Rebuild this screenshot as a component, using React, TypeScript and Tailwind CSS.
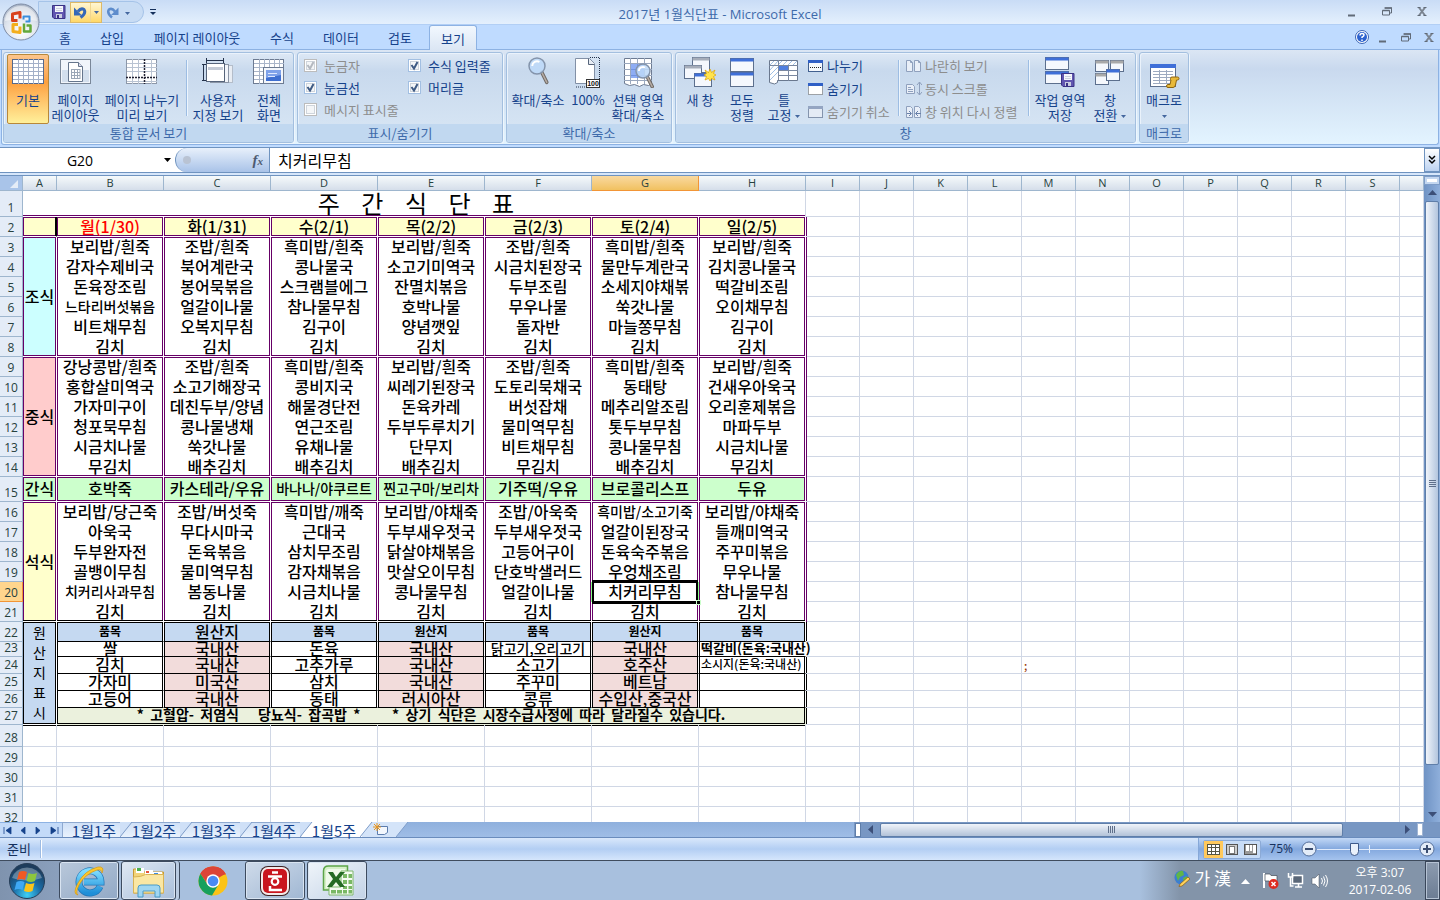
import React from 'react';
import clsx from 'clsx';

/* ---------- Data ---------- */

const COLUMNS = 'ABCDEFGHIJKLMNOPQRS'.split('');
const SPARE = 'IJKLMNOPQRST'.split('');

const DAYS = ['월(1/30)', '화(1/31)', '수(2/1)', '목(2/2)', '금(2/3)', '토(2/4)', '일(2/5)'];

const BREAKFAST = [
  ['보리밥/흰죽', '조밥/흰죽', '흑미밥/흰죽', '보리밥/흰죽', '조밥/흰죽', '흑미밥/흰죽', '보리밥/흰죽'],
  ['감자수제비국', '북어계란국', '콩나물국', '소고기미역국', '시금치된장국', '물만두계란국', '김치콩나물국'],
  ['돈육장조림', '봉어묵볶음', '스크램블에그', '잔멸치볶음', '두부조림', '소세지야채볶', '떡갈비조림'],
  ['느타리버섯볶음', '얼갈이나물', '참나물무침', '호박나물', '무우나물', '쑥갓나물', '오이채무침'],
  ['비트채무침', '오복지무침', '김구이', '양념깻잎', '돌자반', '마늘쫑무침', '김구이'],
  ['김치', '김치', '김치', '김치', '김치', '김치', '김치'],
];

const LUNCH = [
  ['강낭콩밥/흰죽', '조밥/흰죽', '흑미밥/흰죽', '보리밥/흰죽', '조밥/흰죽', '흑미밥/흰죽', '보리밥/흰죽'],
  ['홍합살미역국', '소고기해장국', '콩비지국', '씨레기된장국', '도토리묵채국', '동태탕', '건새우아욱국'],
  ['가자미구이', '데친두부/양념', '해물경단전', '돈육카레', '버섯잡채', '메추리알조림', '오리훈제볶음'],
  ['청포묵무침', '콩나물냉채', '연근조림', '두부두루치기', '물미역무침', '톳두부무침', '마파두부'],
  ['시금치나물', '쑥갓나물', '유채나물', '단무지', '비트채무침', '콩나물무침', '시금치나물'],
  ['무김치', '배추김치', '배추김치', '배추김치', '무김치', '배추김치', '무김치'],
];

const SNACK = ['호박죽', '카스테라/우유', '바나나/야쿠르트', '찐고구마/보리차', '기주떡/우유', '브로콜리스프', '두유'];

const DINNER = [
  ['보리밥/당근죽', '조밥/버섯죽', '흑미밥/깨죽', '보리밥/야채죽', '조밥/아욱죽', '흑미밥/소고기죽', '보리밥/야채죽'],
  ['아욱국', '무다시마국', '근대국', '두부새우젓국', '두부새우젓국', '얼갈이된장국', '들깨미역국'],
  ['두부완자전', '돈육볶음', '삼치무조림', '닭살야채볶음', '고등어구이', '돈육숙주볶음', '주꾸미볶음'],
  ['골뱅이무침', '물미역무침', '감자채볶음', '맛살오이무침', '단호박샐러드', '우엉채조림', '무우나물'],
  ['치커리사과무침', '봄동나물', '시금치나물', '콩나물무침', '얼갈이나물', '치커리무침', '참나물무침'],
  ['김치', '김치', '김치', '김치', '김치', '김치', '김치'],
];

const SMALL = new Set(['느타리버섯볶음', '치커리사과무침', '바나나/야쿠르트', '찐고구마/보리차', '흑미밥/소고기죽']);

const ORIGIN_HEAD = ['품목', '원산지', '품목', '원산지', '품목', '원산지', '품목'];
const ORIGIN = [
  ['쌀', '국내산', '돈육', '국내산', '닭고기,오리고기', '국내산', '떡갈비(돈육:국내산)'],
  ['김치', '국내산', '고추가루', '국내산', '소고기', '호주산', '소시지(돈육:국내산)'],
  ['가자미', '미국산', '삼치', '국내산', '주꾸미', '베트남', ''],
  ['고등어', '국내산', '동태', '러시아산', '콩류', '수입산,중국산', ''],
];

/* ---------- Sheet cells ---------- */

const SHADOW = {
  box: 'shadow-[inset_0_0_0_1px_#660066]',
  top: 'shadow-[inset_1px_0_#660066,inset_-1px_0_#660066,inset_0_1px_#660066]',
  mid: 'shadow-[inset_1px_0_#660066,inset_-1px_0_#660066]',
  bottom: 'shadow-[inset_1px_0_#660066,inset_-1px_0_#660066,inset_0_-1px_#660066]',
  dinnerEnd: 'shadow-[inset_0_-1px_#000,inset_1px_0_#660066,inset_-1px_0_#660066]',
  dinnerTitle: 'shadow-[inset_0_-1px_#000,inset_0_0_0_1px_#660066]',
  black: 'shadow-[inset_0_0_0_1px_#000]',
  blackSides: 'shadow-[inset_1px_0_#000,inset_-1px_0_#000]',
};

const cellBase = 'p-0 text-center whitespace-nowrap bg-clip-padding';

function RowHead({ n, active }: { n: number; active?: boolean }) {
  return (
    <th
      scope="row"
      className={clsx(
        'p-0 pb-[2px] align-bottom border-r border-b font-["Open_Sans","Noto_Sans",sans-serif] text-[12px] leading-[12px] font-normal text-[#27413e] overflow-hidden',
        active ? 'bg-[#ffd58d] border-[#f29536]' : 'bg-[#e4ecf7] border-[#9eb6ce]',
      )}
    >
      {n}
    </th>
  );
}

function Spare({ row, edge, joined }: { row: number; edge?: 'purple' | 'black'; joined?: boolean }) {
  return (
    <>
      {SPARE.map((c) => (
        <td
          key={c}
          className={clsx(
            'p-0 text-[11px] leading-[12px] text-left text-[#993300]',
            c === 'I' && joined
              ? 'border-r border-r-[#d0d7e5] shadow-[inset_1px_0_#660066,inset_0_-1px_#d0d7e5]'
              : 'border-r border-b border-[#d0d7e5]',
            c === 'I' && !joined && edge === 'purple' && 'shadow-[inset_1px_0_#660066]',
            c === 'I' && edge === 'black' && 'shadow-[inset_1px_0_#000]',
            c === 'M' && 'pl-[2px]',
          )}
        >
          {row === 24 && c === 'M' ? ';' : null}
        </td>
      ))}
    </>
  );
}

function Selection() {
  return (
    <span aria-hidden="true">
      <span className="absolute -top-[2px] -bottom-[2px] left-0 right-0 border-x-2 border-y-[3px] border-black" />
      <span className="absolute top-0 bottom-0 -left-[1px] w-[1px] bg-[#8f8]" />
      <span className="absolute top-0 bottom-0 -right-[1px] w-[1px] bg-[#8f8]" />
      <span className="absolute -bottom-[3px] -right-[3px] w-[5px] h-[5px] bg-black border border-[#cfc]" />
    </span>
  );
}

function MealBlock({ title, rows, start, fill, last }: { title: string; rows: string[][]; start: number; fill: string; last?: boolean }) {
  return (
    <>
      {rows.map((r, i) => {
        const n = start + i;
        const end = i === rows.length - 1;
        const shadow = i === 0 ? SHADOW.top : end ? (last ? SHADOW.dinnerEnd : SHADOW.bottom) : SHADOW.mid;
        return (
          <tr key={n} className="h-[20px]">
            <RowHead n={n} active={n === 20} />
            {i === 0 && (
              <td rowSpan={6} className={clsx(cellBase, 'align-middle border-r border-b border-white leading-[19px]', fill, last ? SHADOW.dinnerTitle : SHADOW.box)}>
                {title}
              </td>
            )}
            {r.map((t, c) => {
              const sel = n === 20 && c === 5;
              return (
                <td
                  key={c}
                  className={clsx(
                    cellBase,
                    'align-top border-r border-white leading-[18px]',
                    end && 'border-b',
                    shadow,
                    SMALL.has(t) && 'text-[14px]',
                    sel && 'relative',
                  )}
                >
                  {t}
                  {sel && <Selection />}
                </td>
              );
            })}
            <Spare row={n} edge="purple" joined />
          </tr>
        );
      })}
    </>
  );
}

const ORIGIN_H = ['h-[15px]', 'h-[17px]', 'h-[17px]', 'h-[17px]'];

function Sheet() {
  return (
    <table className='table-fixed w-full border-separate border-spacing-0 font-["Noto_Sans_CJK_KR",sans-serif] text-[16px] font-medium text-black'>
      <colgroup>
        <col className="w-[23px]" />
        <col className="w-[34px]" />
        {DAYS.map((d) => (
          <col key={d} className="w-[107px]" />
        ))}
        {SPARE.slice(0, 11).map((c) => (
          <col key={c} className="w-[54px]" />
        ))}
        <col />
      </colgroup>
      <thead>
        <tr className="h-[15px]">
          <th aria-label="모두 선택" className="p-0 border-r border-b border-[#9eb6ce] bg-[#a9c4e9]">
            <svg width="22" height="14" viewBox="0 0 22 14" className="block">
              <path d="M18 4v8h-8z" fill="#e4ecf7" />
            </svg>
          </th>
          {[...COLUMNS, ''].map((c) => (
            <th
              key={c}
              scope="col"
              className={clsx(
                'p-0 border-r border-b font-["Open_Sans","Noto_Sans",sans-serif] text-[11px] leading-[14px] font-normal text-[#27413e]',
                c === 'G' ? 'bg-linear-to-b from-[#f9d99f] to-[#f1c15f] border-[#f29536]' : 'bg-linear-to-b from-[#f6fafb] to-[#d5deea] border-[#9eb6ce]',
              )}
            >
              {c}
            </th>
          ))}
        </tr>
      </thead>
      <tbody>
        <tr className="h-[26px]">
          <RowHead n={1} />
          <td colSpan={8} className="p-0 pl-[4px] text-center align-top border-r border-b border-r-[#d0d7e5] border-b-white text-[24px] leading-[24px] font-normal whitespace-pre shadow-[inset_0_-1px_#660066]">
            {'주    간    식    단    표'}
          </td>
          <Spare row={1} />
        </tr>
        <tr className="h-[20px]">
          <RowHead n={2} />
          <td className={clsx(cellBase, 'bg-[#ffffcc] border-r border-b border-r-black border-b-white shadow-[inset_-1px_0_#000,inset_0_0_0_1px_#660066]')} />
          {DAYS.map((d, i) => (
            <td key={d} className={clsx(cellBase, 'align-top bg-[#ffffcc] border-r border-b border-white leading-[18px]', SHADOW.box, i === 0 && 'text-[#ff0000]')}>
              {d}
            </td>
          ))}
          <Spare row={2} edge="purple" />
        </tr>
        <MealBlock title="조식" rows={BREAKFAST} start={3} fill="bg-[#ccffff]" />
        <MealBlock title="중식" rows={LUNCH} start={9} fill="bg-[#ffcccc]" />
        <tr className="h-[25px]">
          <RowHead n={15} />
          <td className={clsx(cellBase, 'align-top bg-[#ccffcc] border-r border-b border-white leading-[23px]', SHADOW.box)}>간식</td>
          {SNACK.map((s) => (
            <td key={s} className={clsx(cellBase, 'align-top bg-[#ccffcc] border-r border-b border-white leading-[23px]', SHADOW.box, SMALL.has(s) && 'text-[14px]')}>
              {s}
            </td>
          ))}
          <Spare row={15} edge="purple" />
        </tr>
        <MealBlock title="석식" rows={DINNER} start={16} fill="bg-[#ffffcc]" last />
        <tr className="h-[20px]">
          <RowHead n={22} />
          <td rowSpan={6} className={clsx(cellBase, 'align-top bg-[#c5d9f1] border-r border-b border-white text-[14px] leading-[20px] font-normal', SHADOW.black)}>
            {'원산지표시'.split('').map((ch) => (
              <span key={ch} className="block">
                {ch}
              </span>
            ))}
          </td>
          {ORIGIN_HEAD.map((t, i) => (
            <td
              key={i}
              className={clsx(
                cellBase,
                'align-top bg-[#c5d9f1] border-r border-b border-r-white border-b-black leading-[18px] shadow-[inset_1px_0_#000,inset_-1px_0_#000,inset_0_1px_#000]',
                i !== 1 && 'text-[12px] font-bold',
              )}
            >
              {t}
            </td>
          ))}
          <Spare row={22} edge="black" />
        </tr>
        {ORIGIN.map((r, i) => (
          <tr key={i} className={ORIGIN_H[i]}>
            <RowHead n={23 + i} />
            {r.map((t, c) => (
              <td
                key={c}
                className={clsx(
                  cellBase,
                  'align-top border-r border-b border-r-white border-b-black',
                  i === 0 ? 'leading-[12px]' : 'leading-[14px]',
                  c < 6 && c % 2 === 1 && 'bg-[#f2dcdb]',
                  c === 6 && i === 0 ? 'shadow-[inset_1px_0_#000]' : SHADOW.blackSides,
                  c === 6 && i === 0 && 'text-left pl-[2px] text-[13px] font-bold',
                  c === 6 && i === 1 && 'text-left pl-[2px] text-[12px]',
                  c === 4 && i === 0 && 'text-[14px]',
                )}
              >
                {t}
              </td>
            ))}
            <Spare row={23 + i} edge={i === 0 ? undefined : 'black'} />
          </tr>
        ))}
        <tr className="h-[17px]">
          <RowHead n={27} />
          <td
            colSpan={7}
            className="p-0 align-top text-center whitespace-pre bg-[#ebf1dd] border-r border-b border-[#ebf1dd] text-[14px] font-bold leading-[13px] shadow-[inset_1px_0_#000,inset_-1px_0_#000,inset_0_-1px_#000]"
          >
            {'*  고혈압-  저염식      당뇨식-  잡곡밥  *          *  상기  식단은  시장수급사정에  따라  달라질수  있습니다.'}
          </td>
          <Spare row={27} edge="black" />
        </tr>
        {[28, 29, 30, 31, 32].map((n) => (
          <tr key={n} className={n === 28 ? 'h-[22px]' : 'h-[20px]'}>
            <RowHead n={n} />
            {'ABCDEFGH'.split('').map((c) => (
              <td key={c} className={clsx('p-0 border-r border-b border-[#d0d7e5]', n === 28 && 'shadow-[inset_0_1px_#000]')} />
            ))}
            <Spare row={n} />
          </tr>
        ))}
      </tbody>
    </table>
  );
}

/* ---------- Ribbon icons ---------- */

function Svg({ w, h, children, className }: { w: number; h: number; children: React.ReactNode; className?: string }) {
  return (
    <svg width={w} height={h} viewBox={`0 0 ${w} ${h}`} className={clsx('block shrink-0', className)} aria-hidden="true">
      {children}
    </svg>
  );
}

const GRID_V = 'M6.500 3v25M11.500 3v25M16.500 3v25M21.500 3v25M26.500 3v25';
const GRID_H = 'M1 7.500h30M1 11.500h30M1 15.500h30M1 19.500h30M1 23.500h30';

const IconNormal = () => (
  <Svg w={32} h={32}>
    <rect x="0.500" y="3.500" width="31" height="24" fill="#fff" stroke="#56698c" />
    <path d={GRID_V + GRID_H} stroke="#a3b0c8" fill="none" />
  </Svg>
);
const IconPageLayout = () => (
  <Svg w={32} h={32}>
    <rect x="0.500" y="3.500" width="30" height="24" fill="#f1f5fb" stroke="#7a8798" />
    <path d="M2 14h27v12H2z" fill="#d3dfed" />
    <path d="M8.500 6.500h10l4 4v15h-14z" fill="#fff" stroke="#65758c" />
    <path d="M18.500 6.500v4h4" fill="#dde" stroke="#65758c" />
    <path d="M11 13.500h9M11 16.500h9M11 19.500h9M11 22.500h9M11.500 13v10M14.500 13v10M17.500 13v10M20 13v10" stroke="#9aa6b6" fill="none" />
  </Svg>
);
const IconPageBreak = () => (
  <Svg w={32} h={32}>
    <rect x="0.500" y="3.500" width="30" height="24" fill="#fff" stroke="#8c97a8" />
    <path d="M6.500 3v25M12.500 3v25M25.500 3v25M1 7.500h30M1 11.500h30M1 15.500h30M1 25.500h30" stroke="#b9c3d2" fill="none" />
    <path d="M18.500 3v25M0 21.500h31" stroke="#223" strokeWidth="1.500" strokeDasharray="2 1" fill="none" />
  </Svg>
);
const IconCustomView = () => (
  <Svg w={32} h={32}>
    <rect x="12.500" y="9.500" width="18" height="17" fill="#e9edf3" stroke="#b4bdca" />
    <rect x="8.500" y="8.500" width="18" height="18" fill="#f2f5fa" stroke="#8a95a6" />
    <rect x="4.500" y="7.500" width="18" height="18" fill="#fff" stroke="#56647a" />
    <path d="M6 11h15v3H6z" fill="#c3cad6" />
    <path d="M4 4.500h18M4.500 2v5M21.500 2v5M1.500 8v17M0 8.500h4M0 24.500h4" stroke="#24324a" fill="none" />
  </Svg>
);
const IconFullScreen = () => (
  <Svg w={32} h={32}>
    <rect x="0.500" y="3.500" width="30" height="24" fill="#fff" stroke="#6d7b92" />
    <path d={GRID_V + GRID_H} stroke="#a9b5c9" fill="none" />
    <rect x="10.500" y="11.500" width="20" height="16" fill="#f3f6fb" stroke="#6d7b92" />
    <rect x="13" y="14" width="15" height="11" fill="#3f6fd0" />
    <path d="M13 14h15v5l-15 3z" fill="#7fa2ea" />
    <path d="M15 17.500h9M15 20.500h7" stroke="#dfe9ff" />
  </Svg>
);
const Lens = ({ x, y, r }: { x: number; y: number; r: number }) => (
  <g>
    <path d={`M${x + r * 0.6} ${y + r * 0.8}l5 10`} stroke="#6f6a66" strokeWidth="3.500" strokeLinecap="round" />
    <path d={`M${x + r * 0.6} ${y + r * 0.8}l5 10`} stroke="#b6aca4" strokeWidth="1.500" strokeLinecap="round" />
    <circle cx={x} cy={y} r={r} fill="#bcd8f8" fillOpacity="0.85" stroke="#8494ab" strokeWidth="1.500" />
    <path d={`M${x - r * 0.6} ${y}a${r * 0.6} ${r * 0.6} 0 0 1 ${r * 0.9} -${r * 0.5}`} stroke="#fff" strokeWidth="2" fill="none" />
  </g>
);
const IconZoom = () => (
  <Svg w={32} h={32}>
    <Lens x={15} y={10} r={8} />
  </Svg>
);
const Icon100 = () => (
  <Svg w={32} h={32}>
    <path d="M3.500 2.500h14l5 5v20h-19z" fill="#fff" stroke="#8290a6" />
    <path d="M16.500 2.500v6h6" fill="#e6ebf3" stroke="#56647a" />
    <path d="M18 1.500h9.500v30M4 31h24" stroke="#24324a" strokeDasharray="1 1" fill="none" />
    <rect x="14.500" y="23.500" width="13" height="8" fill="#fff" stroke="#333" />
    <text x="21" y="30" fontSize="7" fontWeight="700" textAnchor="middle" fontFamily="Liberation Sans" fill="#111">100</text>
  </Svg>
);
const IconZoomSel = () => (
  <Svg w={32} h={32}>
    <path d="M2.500 2.500h27v25l-3 2-5-1-4 2-5-2-5 1-5-2z" fill="#fff" stroke="#6d7b92" />
    <path d="M8.500 2v26M15.500 2v26M22.500 2v26M2 7.500h28M2 13.500h28M2 19.500h28M2 24.500h28" stroke="#9aa8be" fill="none" />
    <rect x="9" y="8" width="13" height="14" fill="#5e8af0" fillOpacity="0.7" />
    <Lens x={21} y={15} r={7} />
  </Svg>
);

function Win({ x, y, w, h, c = '#3f6fd8' }: { x: number; y: number; w: number; h: number; c?: string }) {
  return (
    <g>
      <rect x={x + 0.5} y={y + 0.5} width={w} height={h} fill="#f5f8fd" stroke="#5c6f8d" />
      <rect x={x + 0.5} y={y + 0.5} width={w} height="3" fill={c} />
    </g>
  );
}
const Star = ({ x, y }: { x: number; y: number }) => (
  <path transform={`translate(${x} ${y})`} d="M0-6l1.500 3.500L5-5 3.500-1.500 6 0 3.500 1.500 5 5 1.500 3.500 0 6-1.500 3.500-5 5-3.500 1.500-6 0-3.500-1.500-5-5-1.500-2.500z" fill="#ffe34d" stroke="#e0a300" strokeWidth="0.700" />
);
const IconNewWindow = () => (
  <Svg w={32} h={32}>
    <Win x={8} y={1} w={17} h={15} c="#a6adba" />
    <Win x={0} y={9} w={17} h={13} c="#a6adba" />
    <Win x={10} y={17} w={17} h={13} />
    <Star x={26} y={19} />
  </Svg>
);
const IconArrange = () => (
  <Svg w={32} h={32}>
    <Win x={4} y={2} w={23} h={13} />
    <Win x={4} y={16} w={23} h={14} />
  </Svg>
);
const IconFreeze = () => (
  <Svg w={32} h={32}>
    <path d="M1.500 4.500h28v20h-20v2l-3 1.500-5-1.500z" fill="#fff" stroke="#6a788e" />
    <path d="M2 9l4-4M2 14l8-9M2 19l8-8M2 24l8-8M10 9l4-4M15 9l4-4M20 9l4-4M25 9l4-4" stroke="#9fc0e6" />
    <path d="M1 9.500h29M10.500 4v20M20.500 9v16M10 14.500h20M10 19.500h20" stroke="#7a88a0" fill="none" />
    <rect x="11" y="10" width="9" height="4" fill="#4f7fe0" />
  </Svg>
);
const IconSplit = () => (
  <Svg w={16} h={16}>
    <rect x="0.500" y="2.500" width="14" height="11" fill="#f5f8fd" stroke="#42608f" />
    <path d="M0 2h15v3H0z" fill="#2f5fc6" />
    <path d="M2 9.500h11" stroke="#222" strokeDasharray="1 1" />
  </Svg>
);
const IconHide = () => (
  <Svg w={16} h={16}>
    <rect x="0.500" y="2.500" width="14" height="11" fill="#fff" stroke="#555" strokeDasharray="1 1" />
    <path d="M0 2h15v3H0z" fill="#2f5fc6" />
  </Svg>
);
const IconUnhide = () => (
  <Svg w={16} h={16}>
    <rect x="0.500" y="2.500" width="14" height="11" fill="#e4ebf5" stroke="#8494ad" />
    <path d="M0 2h15v3H0z" fill="#94a5c2" />
  </Svg>
);
const IconSide = () => (
  <Svg w={16} h={16}>
    <path d="M0.500 2.500h4l2 2v9h-6zM8.500 2.500h4l2 2v9h-6z" fill="#e9eff8" stroke="#8fa0bd" />
    <path d="M4.500 2.500v2h2M12.500 2.500v2h2" stroke="#8fa0bd" fill="none" />
  </Svg>
);
const IconSync = () => (
  <Svg w={16} h={16}>
    <path d="M0.500 3.500h6l2 2v7h-8z" fill="#e9eff8" stroke="#8fa0bd" />
    <path d="M2 6.500h3M2 8.500h5M2 10.500h5M13.500 1v13M11 4l2.500-3L16 4M11 11l2.500 3L16 11" stroke="#8fa0bd" fill="none" />
  </Svg>
);
const IconReset = () => (
  <Svg w={16} h={16}>
    <path d="M0.500 2.500h4l2 2v9h-6zM8.500 2.500h4l2 2v9h-6z" fill="#e9eff8" stroke="#8fa0bd" />
    <path d="M1 9.500h4M3 7l2.500 2.500L3 12M15 9.500h-5M12 7L9.500 9.500 12 12" stroke="#6880a8" fill="none" />
  </Svg>
);
const Floppy = ({ x, y, s = 1 }: { x: number; y: number; s?: number }) => (
  <g transform={`translate(${x} ${y}) scale(${s})`}>
    <path d="M0.500 0.500h12.500v13H2l-1.500-1.500z" fill="#6156b0" stroke="#3a3285" />
    <path d="M3 1h8v6H3z" fill="#f4f6fb" />
    <path d="M4 3.500h6M4 5.500h6" stroke="#b9c0d0" strokeWidth="0.700" />
    <path d="M4 9h6v4H4z" fill="#c9cde0" />
    <path d="M5 10h2v3H5z" fill="#3a3285" />
  </g>
);
const IconSaveWs = () => (
  <Svg w={32} h={32}>
    <Win x={1} y={1} w={23} h={12} />
    <Win x={1} y={15} w={23} h={12} />
    <Floppy x={17} y={17} />
  </Svg>
);
const IconSwitch = () => (
  <Svg w={32} h={32}>
    <Win x={1} y={4} w={13} h={11} c="#a9a9a9" />
    <Win x={16} y={4} w={13} h={11} c="#a9a9a9" />
    <Win x={1} y={17} w={13} h={11} c="#a9a9a9" />
    <Win x={12} y={13} w={13} h={11} />
  </Svg>
);
const IconMacro = () => (
  <Svg w={32} h={32}>
    <rect x="2.500" y="8.500" width="25" height="22" fill="#fff" stroke="#5c6f8d" />
    <path d="M2 8h26v4H2z" fill="#3f6fd8" />
    <path d="M5 15.500h20M5 18.500h20M5 21.500h20M5 24.500h20M5 27.500h20M11.500 14v14M18.500 14v14" stroke="#9daac0" />
    <path d="M22.500 22.500q0-1.500 1.500-1.500h5.500q1.500 0 1.500 1.500t-1.500 1.500h-1l-1 5q-0.500 2.500-2.500 2.500h-5q-1.500 0-1.500-1.500t1.500-1.500h2l1-4.500q-1 0-0.500-1.500z" fill="#e8b93a" stroke="#8d6510" />
  </Svg>
);

/* ---------- Ribbon pieces ---------- */

const Caret = ({ className }: { className?: string }) => (
  <svg width="5" height="3" viewBox="0 0 5 3" className={clsx('inline-block align-middle', className)} aria-hidden="true">
    <path d="M0 0h5L2.500 3z" fill="#44679f" />
  </svg>
);

function BigButton({ icon, lines, width, caret, active }: { icon: React.ReactNode; lines: string[]; width: string; caret?: boolean; active?: boolean }) {
  return (
    <button
      type="button"
      className={clsx(
        'flex flex-col items-center h-[70px] pt-[1px] rounded-[2px] border text-[13px] leading-[15px] text-[#15428b] whitespace-nowrap shrink-0',
        width,
        active ? 'border-[#b8883a] bg-linear-to-b from-[#fcc58c] via-[#fca03f] via-40% to-[#fff09a]' : 'border-transparent',
      )}
    >
      {icon}
      <span className="pt-[4px]">{lines[0]}</span>
      <span>
        {lines[1]}
        {caret && <Caret className={lines[1] ? 'ml-[4px]' : undefined} />}
      </span>
    </button>
  );
}

function SmallButton({ icon, label, disabled }: { icon: React.ReactNode; label: string; disabled?: boolean }) {
  return (
    <button type="button" disabled={disabled} className={clsx('flex items-center gap-[3px] h-[23px] text-[13px] leading-[15px] whitespace-nowrap', disabled ? 'text-[#8d8d8d]' : 'text-[#15428b]')}>
      {icon}
      {label}
    </button>
  );
}

function Group({ title, width, children }: { title: string; width: string; children: React.ReactNode }) {
  return (
    <section aria-label={title} className={clsx('flex flex-col shrink-0 h-[91px] rounded-[3px] border border-[#a3bfdf] shadow-[1px_1px_0_#eef6fd,inset_1px_1px_0_#eaf2fb] bg-linear-to-b from-[#dde8f5] via-[#c8d9ed] via-20% to-[#d9e7f5]', width)}>
      <div className="flex flex-1 pt-[1px] px-[3px]">{children}</div>
      <div className="h-[18px] shrink-0 text-center text-[13px] leading-[18px] text-[#3e6aaa] bg-[#c1d8f0] rounded-b-[2px]">{title}</div>
    </section>
  );
}

const Divider = ({ className }: { className?: string }) => <span className={clsx('w-[2px] h-[56px] mt-[6px] border-l border-[#9dbde3] bg-[#edf5fd] shrink-0', className)} />;

function Check({ label, checked, disabled }: { label: string; checked?: boolean; disabled?: boolean }) {
  return (
    <label className={clsx('flex items-center gap-[7px] h-[22px] text-[13px] leading-[15px] whitespace-nowrap', disabled ? 'text-[#8d8d8d]' : 'text-[#15428b]')}>
      <span className="relative w-[13px] h-[13px] shrink-0">
        <input
          type="checkbox"
          defaultChecked={checked}
          disabled={disabled}
          className="peer appearance-none block w-[13px] h-[13px] border border-[#a2bfe2] bg-[#f4f6f8] shadow-[inset_0_0_0_1px_#fff,inset_0_0_0_2px_#cfd5dc] disabled:border-[#bcbcbc]"
        />
        <svg width="13" height="13" viewBox="0 0 13 13" className={clsx('absolute inset-0 pointer-events-none hidden peer-checked:block', disabled ? 'text-[#b4b9c0]' : 'text-[#3f5b84]')} aria-hidden="true">
          <path d="M3.500 6l2.500 3.500L9.500 3" stroke="currentColor" strokeWidth="2" fill="none" />
        </svg>
      </span>
      {label}
    </label>
  );
}

const TABS: [string, string][] = [
  ['홈', 'w-[46px]'],
  ['삽입', 'w-[48px]'],
  ['페이지 레이아웃', 'w-[122px]'],
  ['수식', 'w-[48px]'],
  ['데이터', 'w-[70px]'],
  ['검토', 'w-[48px]'],
  ['보기', 'w-[48px]'],
];

function WindowButtons({ gap }: { gap: string }) {
  return (
    <div className={clsx('flex items-center', gap)}>
      <button type="button" aria-label="최소화">
        <Svg w={11} h={11}>
          <path d="M1 9.500h7" stroke="#616b78" strokeWidth="2" />
        </Svg>
      </button>
      <button type="button" aria-label="이전 크기로 복원">
        <Svg w={11} h={11}>
          <path d="M3 2h6.500v5H8M0.500 4.500h7v4.500h-7z" stroke="#616b78" fill="none" />
          <path d="M2.500 2h7.500M0.500 4.500h7" stroke="#616b78" strokeWidth="1.500" />
        </Svg>
      </button>
      <button type="button" aria-label="닫기">
        <Svg w={11} h={11}>
          <path d="M2 1.500l6 8M8 1.500l-6 8" stroke="#7b8490" strokeWidth="2" />
          <path d="M0.500 1.500h3M6.500 1.500h3M0.500 9.500h3M6.500 9.500h3" stroke="#616b78" />
        </Svg>
      </button>
    </div>
  );
}

function OfficeOrb() {
  return (
    <button type="button" aria-label="Office 단추" className="absolute left-[2px] top-[3px] z-10">
      <Svg w={38} h={38}>
        <defs>
          <radialGradient id="orb" cx="50%" cy="75%" r="75%">
            <stop offset="0" stopColor="#fff" />
            <stop offset="0.600" stopColor="#dde3ec" />
            <stop offset="1" stopColor="#a9b4c6" />
          </radialGradient>
        </defs>
        <circle cx="19" cy="19" r="18" fill="url(#orb)" stroke="#7d8ba4" />
        <path d="M3 18a16 15 0 0 1 32 0q-16-4-32 0z" fill="#fff" opacity="0.500" />
        <g fill="none" strokeWidth="3" strokeLinejoin="round">
          <path d="M15.500 17.500h-5v-6.500l7.500-1.500v6" stroke="#d9421c" />
          <path d="M21.500 16.500v-3h6v5h-4" stroke="#3b8edc" strokeWidth="2" />
          <path d="M16 21.500h-5v7l7 1v-6" stroke="#f3ae1c" />
          <path d="M22 20.500v8h6.500v-6h-4" stroke="#63a83a" strokeWidth="2.500" />
        </g>
      </Svg>
    </button>
  );
}

function TitleBar() {
  return (
    <header className="relative flex items-center h-[25px] shrink-0 bg-linear-to-b from-[#c9dcf6] to-[#e4f0fd] border-b border-[#b2cff5]">
      <div className="flex items-center h-[22px] ml-[38px] pl-[13px] pr-[6px] w-[106px] rounded-r-full border border-[#a5c3e8] bg-[#c8dcf4]">
        <button type="button" aria-label="저장">
          <Svg w={15} h={15}>
            <Floppy x={0} y={0} />
          </Svg>
        </button>
        <div className="flex items-center h-[21px] ml-[3px] border border-[#dcb968] bg-linear-to-b from-[#fff6d2] to-[#ffd867]">
          <button type="button" aria-label="실행 취소" className="px-[2px]">
            <Svg w={15} h={15}>
              <path d="M5 6.500Q8 2.500 11 4.500Q13.500 8 7.500 12.500" stroke="#3568b8" strokeWidth="3" fill="none" />
              <path d="M1 2.500v8h8z" fill="#3568b8" />
            </Svg>
          </button>
          <button type="button" aria-label="실행 취소 목록" className="flex items-center justify-center w-[11px] h-full border-l border-[#f0d690]">
            <Caret />
          </button>
        </div>
        <button type="button" aria-label="다시 실행" className="ml-[4px]">
          <Svg w={14} h={15}>
            <path d="M9 6.500Q6 2.500 3 4.500Q0.500 8 6 12.500" stroke="#5d8ccc" strokeWidth="2.500" fill="none" />
            <path d="M12.500 2.500v7.500h-7.500z" fill="#5d8ccc" />
          </Svg>
        </button>
        <span className="ml-[5px] leading-[3px]">
          <Caret />
        </span>
      </div>
      <button type="button" aria-label="빠른 실행 도구 모음 사용자 지정" className="ml-[6px]">
        <Svg w={6} h={7}>
          <path d="M0 0.500h6" stroke="#15305c" />
          <path d="M0 3h6L3 6z" fill="#15305c" />
        </Svg>
      </button>
      <h1 className='absolute inset-x-0 text-center pointer-events-none font-["Open_Sans","Noto_Sans_CJK_KR",sans-serif] text-[13px] leading-[16px] text-[#3e6aaa] pt-[3px]'>
        2017년 1월식단표 - Microsoft Excel
      </h1>
      <div className="ml-auto pr-[12px] pb-[2px]">
        <WindowButtons gap="gap-[24px]" />
      </div>
    </header>
  );
}

function RibbonTabs() {
  return (
    <nav className="flex items-end h-[25px] shrink-0 bg-[#bfdbff] pl-[42px] pr-[5px] border-b border-[#8db2e3]">
      {TABS.map(([t, w]) => (
        <button
          key={t}
          type="button"
          className={clsx(
            'text-[13px] leading-[23px] text-[#15428b] whitespace-nowrap h-[24px] border border-b-0 rounded-t-[3px]',
            w,
            t === '보기' ? 'ml-[5px] bg-linear-to-b from-[#f2f8fe] to-[#dbe6f4] border-[#8db2e3] -mb-px h-[25px]' : 'border-transparent',
          )}
        >
          {t}
        </button>
      ))}
      <div className="ml-auto flex items-center gap-[9px] h-full">
        <button type="button" aria-label="도움말">
          <Svg w={14} h={14}>
            <circle cx="7" cy="7" r="6.500" fill="#fff" stroke="#3a64b4" />
            <circle cx="7" cy="7" r="5" fill="#2c62cf" />
            <path d="M5 5.500q0-2 2-2t2 1.500q0 1-2 2.200v0.800M7 9.500v1.500" stroke="#fff" strokeWidth="1.500" fill="none" />
          </Svg>
        </button>
        <WindowButtons gap="gap-[12px]" />
      </div>
    </nav>
  );
}

function Ribbon() {
  return (
    <div className="h-[97px] shrink-0 bg-[#bfdbff] pl-px pr-px pb-[2px]">
      <div className="flex gap-[3px] h-[95px] pl-[1px] pt-[2px] rounded-b-[3px] border-x border-b border-[#8db2e3] bg-linear-to-b from-[#dbe6f4] via-[#c9d9ee] via-20% to-[#e3f4ff] overflow-hidden">
        <Group title="통합 문서 보기" width="w-[291px]">
          <BigButton icon={<IconNormal />} lines={['기본']} width="w-[42px]" active />
          <BigButton icon={<IconPageLayout />} lines={['페이지', '레이아웃']} width="w-[53px]" />
          <BigButton icon={<IconPageBreak />} lines={['페이지 나누기', '미리 보기']} width="w-[80px]" />
          <Divider className="ml-[4px]" />
          <BigButton icon={<IconCustomView />} lines={['사용자', '지정 보기']} width="w-[60px]" />
          <BigButton icon={<IconFullScreen />} lines={['전체', '화면']} width="w-[42px]" />
        </Group>
        <Group title="표시/숨기기" width="w-[206px]">
          <div className="flex flex-col w-[106px] pl-[3px]">
            <Check label="눈금자" checked disabled />
            <Check label="눈금선" checked />
            <Check label="메시지 표시줄" disabled />
          </div>
          <div className="flex flex-col pl-[1px]">
            <Check label="수식 입력줄" checked />
            <Check label="머리글" checked />
          </div>
        </Group>
        <Group title="확대/축소" width="w-[166px]">
          <BigButton icon={<IconZoom />} lines={['확대/축소']} width="w-[56px]" />
          <BigButton icon={<Icon100 />} lines={['100%']} width="w-[44px]" />
          <BigButton icon={<IconZoomSel />} lines={['선택 영역', '확대/축소']} width="w-[56px]" />
        </Group>
        <Group title="창" width="w-[461px]">
          <BigButton icon={<IconNewWindow />} lines={['새 창']} width="w-[42px]" />
          <BigButton icon={<IconArrange />} lines={['모두', '정렬']} width="w-[42px]" />
          <BigButton icon={<IconFreeze />} lines={['틀', '고정']} width="w-[42px]" caret />
          <div className="flex flex-col w-[90px] pl-[3px]">
            <SmallButton icon={<IconSplit />} label="나누기" />
            <SmallButton icon={<IconHide />} label="숨기기" />
            <SmallButton icon={<IconUnhide />} label="숨기기 취소" disabled />
          </div>
          <Divider className="ml-[3px]" />
          <div className="flex flex-col w-[125px] pl-[6px]">
            <SmallButton icon={<IconSide />} label="나란히 보기" disabled />
            <SmallButton icon={<IconSync />} label="동시 스크롤" disabled />
            <SmallButton icon={<IconReset />} label="창 위치 다시 정렬" disabled />
          </div>
          <Divider className="ml-[3px]" />
          <BigButton icon={<IconSaveWs />} lines={['작업 영역', '저장']} width="w-[60px]" />
          <BigButton icon={<IconSwitch />} lines={['창', '전환']} width="w-[40px]" caret />
        </Group>
        <Group title="매크로" width="w-[50px]">
          <BigButton icon={<IconMacro />} lines={['매크로', '']} width="w-[42px]" caret />
        </Group>
      </div>
    </div>
  );
}

function FormulaBar() {
  return (
    <div className='flex h-[26px] shrink-0 border-y border-[#6f93bf] bg-white font-["Open_Sans","Noto_Sans_CJK_KR",sans-serif]'>
      <input aria-label="이름 상자" defaultValue="G20" className="w-[160px] h-full text-center text-[14px] leading-[24px] text-black bg-white" />
      <button type="button" aria-label="이름 목록" className="w-[15px] flex items-center justify-center">
        <Svg w={7} h={4}>
          <path d="M0 0h7L3.500 4z" fill="#000" />
        </Svg>
      </button>
      <div className="flex items-center w-[95px] h-full pl-[7px] pr-[6px] rounded-l-full border-l border-r border-[#6f93bf] bg-linear-to-b from-[#e8f0fb] to-[#a9c3e8]">
        <span className="w-[8px] h-[8px] rounded-full bg-[#b9c3d3]" />
        <button type="button" aria-label="함수 삽입" className='ml-auto font-["Liberation_Serif",serif] italic font-bold text-[15px] leading-[18px] text-[#4d5a70] flex items-center'>
          f<span className="text-[11px] pt-[2px]">x</span>
        </button>
      </div>
      <input aria-label="수식 입력줄" defaultValue="치커리무침" className='flex-1 min-w-0 h-full pl-[8px] text-[16px] leading-[24px] text-black font-["Noto_Sans_CJK_KR",sans-serif]' />
      <button type="button" aria-label="수식 입력줄 확장" className="w-[16px] flex items-center justify-center border border-[#6f93bf] bg-linear-to-b from-white to-[#bcd2f0]">
        <Svg w={8} h={10}>
          <path d="M1 1l3 3 3-3M1 5l3 3 3-3" stroke="#000" strokeWidth="1.500" fill="none" />
        </Svg>
      </button>
    </div>
  );
}

function VScroll() {
  return (
    <div aria-hidden="true" className="flex flex-col items-center w-[16px] shrink-0 bg-linear-to-r from-[#6f93c4] to-[#8fafdb]">
      <span className="w-[14px] h-[7px] mt-px bg-white border-2 border-[#c3d7f0] shadow-[0_0_0_1px_#7d9cc8]" />
      <span className="flex h-[17px] items-center">
        <Svg w={9} h={5}>
          <path d="M0 5h9L4.500 0z" fill="#3c4f78" />
        </Svg>
      </span>
      <span className="flex flex-col items-center justify-center gap-px flex-1 w-[14px] rounded-[2px] border border-[#5f7ea9] bg-linear-to-r from-[#f0f4fa] to-[#b3c5de] mb-[41px]">
        {[0, 1, 2, 3].map((i) => (
          <span key={i} className="w-[7px] h-px bg-[#5f6f8a]" />
        ))}
      </span>
      <span className="flex h-[16px] items-center">
        <Svg w={9} h={5}>
          <path d="M0 0h9L4.500 5z" fill="#3c4f78" />
        </Svg>
      </span>
    </div>
  );
}

const SHEETS = ['1월1주', '1월2주', '1월3주', '1월4주', '1월5주'];

function SheetTabs() {
  return (
    <div className="flex h-[16px] shrink-0 bg-linear-to-b from-[#8fb0dd] to-[#9fbde6] border-b border-[#6a8cbd]">
      <div className="flex items-center justify-around w-[62px] h-full bg-[#c3daf8] border-t border-[#8db2e3]">
        {['M2 1v7M9 1v7L4 4.500z', 'M7 1v7L3 4.500z', 'M3 1v7l4-3.500z', 'M9 1v7M2 1v7l5-3.500z'].map((d, i) => (
          <button key={i} type="button" aria-label={['첫 시트', '이전 시트', '다음 시트', '마지막 시트'][i]}>
            <Svg w={11} h={9}>
              <path d={d} fill="#15428b" stroke="#15428b" strokeWidth="0.800" />
            </Svg>
          </button>
        ))}
      </div>
      {SHEETS.map((s, i) => {
        const on = i === 4;
        return (
          <button
            key={s}
            type="button"
            className={clsx(
              'relative w-[60px] h-[15px] text-[15px] leading-[13px] text-[#15428b] whitespace-nowrap border-l border-t pl-[3px]',
              i === 0 ? 'border-l-[#8ea9d0]' : 'border-l-transparent',
              on ? 'bg-white border-t-white' : 'bg-linear-to-b from-[#cfe0f7] to-[#e9f2fd] border-t-[#8ea9d0]',
            )}
          >
            {s}
            <svg width="14" height="15" viewBox="0 0 14 15" className="absolute -right-[12px] bottom-0 z-10" aria-hidden="true">
              <path d="M0 15L12 0H0z" fill={on ? '#fff' : '#cfe0f7'} />
              <path d="M0 15L12 0" stroke="#7f9dc9" fill="none" />
            </svg>
          </button>
        );
      })}
      <button type="button" aria-label="워크시트 삽입" className="relative w-[34px] h-[15px] flex items-center justify-center bg-[#d4e4f9]">
        <Svg w={16} h={13} className="ml-[4px]">
          <path d="M4.500 3.500h10v6l-3 2h-7z" fill="#f3f7fd" stroke="#5c7dae" />
          <path d="M4 0v8M0 4h8M1 1l6 6M7 1L1 7" stroke="#e8951f" />
        </Svg>
        <svg width="12" height="15" viewBox="0 0 12 15" className="absolute -right-[12px] top-0" aria-hidden="true">
          <path d="M0 15L12 0H0z" fill="#d4e4f9" />
          <path d="M0 15L12 0" stroke="#7f9dc9" fill="none" />
        </svg>
      </button>
      <div aria-hidden="true" className="flex items-center ml-auto w-[40.7%] min-w-[200px] h-full bg-[#7897c3]">
        <span className="w-[6px] h-[14px] mx-px bg-white border border-[#5f7ea9]" />
        <span className="flex w-[18px] justify-center">
          <Svg w={5} h={9}>
            <path d="M5 0v9L0 4.500z" fill="#3c4f78" />
          </Svg>
        </span>
        <span className="flex items-center justify-center gap-px flex-1 h-[14px] rounded-[2px] border border-[#5f7ea9] bg-linear-to-b from-[#f0f4fa] to-[#b3c2d8] mr-[62px]">
          {[0, 1, 2, 3].map((i) => (
            <span key={i} className="w-px h-[7px] bg-[#5f6f8a]" />
          ))}
        </span>
        <Svg w={5} h={9}>
          <path d="M0 0v9l5-4.500z" fill="#3c4f78" />
        </Svg>
        <span className="w-[6px] h-[13px] ml-[7px] mr-[17px] bg-white border border-[#9fb4d3]" />
      </div>
    </div>
  );
}

function ZoomKnob({ plus }: { plus?: boolean }) {
  return (
    <button type="button" aria-label={plus ? '확대' : '축소'}>
      <Svg w={16} h={16}>
        <circle cx="8" cy="8" r="7" fill="#e3ecf8" stroke="#56709b" />
        <path d={plus ? 'M4 8h8M8 4v8' : 'M4 8h8'} stroke="#3a4d70" strokeWidth="2" />
      </Svg>
    </button>
  );
}

function StatusBar() {
  return (
    <footer className="flex items-center h-[22px] shrink-0 bg-linear-to-b from-[#d9e8fb] via-[#b3cef3] to-[#d5e6fc] text-[13px] leading-[16px] text-[#15305c]">
      <span className="pl-[7px] w-[40px]">준비</span>
      <span className="w-[2px] h-[18px] border-l border-[#9dbbe3] bg-white" />
      <div className="flex items-center ml-auto h-full pl-[4px] pr-[5px] border-l border-[#86a8d8] bg-linear-to-b from-[#c2d8f6] via-[#83a8de] to-[#a5c3ee]">
        <div className="flex border border-[#8caad6] rounded-[2px] bg-[#c8dcf6]">
          <button type="button" aria-label="기본" className="p-px bg-[#ffc95c]">
            <Svg w={17} h={15}>
              <rect x="2.500" y="2.500" width="12" height="10" fill="#fff" stroke="#554" />
              <path d="M6.500 2v11M10.500 2v11M2 5.500h13M2 9.500h13" stroke="#554" />
            </Svg>
          </button>
          <button type="button" aria-label="페이지 레이아웃" className="p-px">
            <Svg w={16} h={15}>
              <rect x="2.500" y="2.500" width="11" height="10" fill="#ccc" stroke="#555" />
              <rect x="5.500" y="4.500" width="5" height="7" fill="#fff" stroke="#777" />
            </Svg>
          </button>
          <button type="button" aria-label="페이지 나누기 미리 보기" className="p-px">
            <Svg w={17} h={15}>
              <rect x="2.500" y="2.500" width="12" height="10" fill="#999" stroke="#555" />
              <path d="M4 3h3v6H4zM8 3h2v6H8zM11 3h3v8h-3z" fill="#fff" />
            </Svg>
          </button>
        </div>
        <span className='px-[8px] font-["Open_Sans",sans-serif] text-[12px]'>75%</span>
        <ZoomKnob />
        <div className="relative flex items-center">
          <span className="absolute left-[52px] w-px h-[8px] bg-[#e6effb]" />
          <input
            type="range"
            aria-label="확대/축소 비율"
            min={0}
            max={100}
            defaultValue={36}
            className="relative appearance-none w-[102px] h-[14px] bg-[linear-gradient(#dfeafb,#dfeafb)] bg-[length:100%_1px] bg-center bg-no-repeat [&::-webkit-slider-thumb]:appearance-none [&::-webkit-slider-thumb]:w-[9px] [&::-webkit-slider-thumb]:h-[13px] [&::-webkit-slider-thumb]:bg-[#eaf1fb] [&::-webkit-slider-thumb]:border [&::-webkit-slider-thumb]:border-[#3f5a8a] [&::-webkit-slider-thumb]:rounded-b-[5px]"
          />
        </div>
        <ZoomKnob plus />
      </div>
    </footer>
  );
}

/* ---------- Taskbar ---------- */

const TaskWindows = () => (
  <Svg w={38} h={38}>
    <defs>
      <radialGradient id="start" cx="50%" cy="90%" r="80%">
        <stop offset="0" stopColor="#3fd0f5" />
        <stop offset="0.500" stopColor="#1a6ca6" />
        <stop offset="1" stopColor="#1d3c5c" />
      </radialGradient>
    </defs>
    <circle cx="19" cy="19" r="17.500" fill="url(#start)" stroke="#263d57" />
    <path d="M4 16a15.500 14 0 0 1 30 0q-15 5-30 0z" fill="#fff" opacity="0.300" />
    <path d="M11 10q4-2 8 0l-2 8q-4-2-8 0z" fill="#ef5a24" />
    <path d="M20.500 11q4 2 8.500 0l-2 8q-4 2-8.500 0z" fill="#8cc63e" />
    <path d="M8.500 20q4-2 8 0l-2 8q-4-2-8 0z" fill="#3fa9f5" />
    <path d="M18 21q4 2 8.500 0l-2 8q-4 2-8.500 0z" fill="#fcc419" />
  </Svg>
);
const TaskIE = () => (
  <Svg w={34} h={34}>
    <defs>
      <linearGradient id="ie" x1="0" y1="0" x2="0" y2="1">
        <stop offset="0" stopColor="#7fdcff" />
        <stop offset="1" stopColor="#1f8fd8" />
      </linearGradient>
    </defs>
    <path d="M28 22.500A11 11 0 1 1 29 18H12" fill="none" stroke="#2477b8" strokeWidth="7" />
    <path d="M28 22.500A11 11 0 1 1 29 18H12" fill="none" stroke="url(#ie)" strokeWidth="5.500" />
    <path d="M6 31Q0 30 6 19Q13 6 26 3q7-1 4 6q0-4-5-3Q13 10 7 21q-4 8-1 10z" fill="#fcc62d" stroke="#d69a10" strokeWidth="0.700" />
  </Svg>
);
const TaskFolder = () => (
  <Svg w={34} h={34}>
    <path d="M1.500 29V5h8l2 3h20v21z" fill="#f2d47b" stroke="#c89b35" />
    <path d="M4 4h8v5H4z" fill="#fff" />
    <path d="M5 4h4v3H5z" fill="#4caf50" />
    <path d="M13 6h8v5h-8z" fill="#fff" />
    <path d="M14 7h3v2h-3z" fill="#e5533a" />
    <path d="M21 8h9v5h-9z" fill="#fff" />
    <path d="M22 9h4v2h-4z" fill="#3c8de0" />
    <path d="M1.500 13q8 0 12-2.500h18V29h-30z" fill="#fae7a4" stroke="#d9b456" />
    <path d="M6 33V24q0-3 3-3h16q3 0 3 3v9h-5v-6H11v6z" fill="#9fd6f2" stroke="#4a9bc7" />
  </Svg>
);
const TaskChrome = () => (
  <Svg w={30} h={30}>
    <circle cx="15" cy="15" r="14.500" fill="#fbc316" />
    <path d="M15 15L2.400 7.800A14.500 14.500 0 0 1 27.600 7.800z" fill="#dc4437" />
    <path d="M15 8.500h12.900A14.500 14.500 0 0 0 2.400 7.800L9.400 18z" fill="#dc4437" />
    <path d="M2.400 7.800A14.500 14.500 0 0 0 14 29.500l6.500-11L15 21.500l-5.600-3.300z" fill="#17a05d" />
    <circle cx="15" cy="15" r="6.700" fill="#fff" />
    <circle cx="15" cy="15" r="5.300" fill="#4a8af4" />
  </Svg>
);
const TaskHan = () => (
  <Svg w={32} h={32}>
    <rect x="1" y="1" width="30" height="30" rx="8" fill="#3d2020" />
    <rect x="2" y="2" width="28" height="28" rx="7" fill="#f4e9e9" />
    <rect x="4" y="4" width="24" height="24" rx="5" fill="#c9151e" />
    <path d="M13 7.500h6M9 11.500h14M11 21v4h12" stroke="#fff" strokeWidth="2.500" fill="none" />
    <circle cx="16" cy="16.500" r="3.300" stroke="#fff" strokeWidth="2.200" fill="none" />
  </Svg>
);
const TaskExcel = () => (
  <Svg w={34} h={34}>
    <path d="M3.500 26V7q0-5 5-5h19v24z" fill="#d5efc6" stroke="#5da548" strokeWidth="1.500" />
    <path d="M6 24V8q0-3 3-3h16v19z" fill="#f0faea" />
    <path d="M21 7h12v24H9v-8h12z" fill="#f5fbf2" stroke="#7fb76c" />
    <path d="M23 10h4v4h-4zM28.500 10h3.500v4h-3.500zM23 16h4v4h-4zM28.500 16h3.500v4h-3.500zM23 22h4v3h-4zM28.500 22h3.500v3h-3.500zM11 26h5v3.500h-5zM17 26h5v3.500h-5zM23 26h4v3.500h-4zM28.500 26h3.500v3.500h-3.500z" fill="#79b864" />
    <path d="M8 8h5l3 5 4-5h5l-6 7 6 8h-5l-4-5-4 5H7l6-8z" fill="#256b24" />
  </Svg>
);

const taskBtn = 'flex items-center justify-center h-[39px] rounded-[3px] border border-[#3d4b5f] shadow-[inset_0_0_0_1px_#d9e4f1]';

function Taskbar() {
  return (
    <div className="flex items-center h-[40px] shrink-0 border-t border-[#3f4c5e] bg-[linear-gradient(90deg,#7f93ae_0,#8ba0bd_60px,#a8c0de_130px,#a8c0de_calc(100%-300px),#8394a9_calc(100%-260px))]">
      <button type="button" aria-label="시작" className="ml-[8px]">
        <TaskWindows />
      </button>
      <button type="button" aria-label="Internet Explorer" className={clsx(taskBtn, 'ml-[13px] w-[60px] bg-linear-to-br from-[#b9c8da] to-[#92a9c6]')}>
        <TaskIE />
      </button>
      <button type="button" aria-label="탐색기" className={clsx(taskBtn, 'ml-[2px] w-[55px] bg-linear-to-br from-[#dfe8f3] to-[#a9bfda]')}>
        <TaskFolder />
      </button>
      <span className="w-[4px] h-[39px] border-r border-[#3d4b5f] bg-[#b9cbe1] rounded-r-[3px]" />
      <button type="button" aria-label="Chrome" className="flex items-center justify-center w-[65px]">
        <TaskChrome />
      </button>
      <button type="button" aria-label="한글" className={clsx(taskBtn, 'w-[60px] bg-linear-to-br from-[#cfdbea] to-[#a0b7d3]')}>
        <TaskHan />
      </button>
      <button type="button" aria-label="Microsoft Excel" className={clsx(taskBtn, 'ml-[2px] w-[60px] bg-linear-to-br from-[#f0f5fa] to-[#c2d2e6]')}>
        <TaskExcel />
      </button>
      <div className="flex items-center ml-auto h-full text-white">
        <Svg w={17} h={17} className="mb-[4px]">
          <circle cx="7.500" cy="7.500" r="7" fill="#3c7ed0" />
          <path d="M2 5q3-5 7-4l1 4-4 2-2 4zM9 8l4-2 1 4-4 3z" fill="#5fb548" />
          <path d="M6 14l8-7 2 2-8 7-3 0.500z" fill="#ffd25a" stroke="#8b5d15" strokeWidth="0.700" />
        </Svg>
        <span className='ml-[4px] mb-[6px] font-["Noto_Sans_CJK_KR",sans-serif] text-[17px] leading-[20px]'>가 漢</span>
        <button type="button" aria-label="숨겨진 아이콘 표시" className="ml-[10px] mt-[2px]">
          <Svg w={9} h={5}>
            <path d="M0 5h9L4.500 0z" fill="#fff" />
          </Svg>
        </button>
        <Svg w={18} h={18} className="ml-[12px]">
          <path d="M2 1v15" stroke="#fff" strokeWidth="2" />
          <path d="M3 2h5l1 1.500h6v7H8L7 9H3z" fill="#fff" stroke="#444c58" strokeWidth="0.700" />
          <circle cx="11.500" cy="12" r="5" fill="#dd2b20" />
          <path d="M9.500 10l4 4M13.500 10l-4 4" stroke="#fff" strokeWidth="1.500" />
        </Svg>
        <Svg w={17} h={17} className="ml-[7px]">
          <rect x="5.500" y="3.500" width="10" height="8" fill="#5a6778" stroke="#fff" strokeWidth="1.500" />
          <path d="M8 15h7M11.500 12v3M1.500 1v4h4V1M3.500 5v9h3" stroke="#fff" strokeWidth="1.500" fill="none" />
        </Svg>
        <Svg w={18} h={16} className="ml-[7px]">
          <path d="M1 5h3l4-4v14l-4-4H1z" fill="#fff" stroke="#444c58" strokeWidth="0.500" />
          <path d="M10.500 5q2 3 0 6M12.500 3.500q3 4.500 0 9M14.500 2q4 6 0 12" stroke="#fff" fill="none" />
        </Svg>
        <time className='ml-[14px] w-[74px] text-center font-["Open_Sans","Noto_Sans_CJK_KR",sans-serif] text-[12px] leading-[17px]'>
          오후 3:07
          <br />
          2017-02-06
        </time>
        <button type="button" aria-label="바탕 화면 보기" className="ml-[8px] w-[15px] h-[39px] border border-[#39465a] shadow-[inset_0_0_0_1px_#b6c3d4] bg-linear-to-b from-[#8d9cb0] to-[#6c7c93]" />
      </div>
    </div>
  );
}

export default function App() {
  return (
    <div className='relative flex flex-col h-screen w-full overflow-hidden bg-[#bfdbff] font-["Noto_Sans_CJK_KR",sans-serif]'>
      <OfficeOrb />
      <TitleBar />
      <RibbonTabs />
      <Ribbon />
      <FormulaBar />
      <div className="h-[2px] shrink-0 bg-[#d6e6fa]" />
      <main className="flex flex-1 min-h-0 border-t border-[#6f93bf] bg-white">
        <div className="flex-1 min-w-0 overflow-hidden">
          <Sheet />
        </div>
        <VScroll />
      </main>
      <SheetTabs />
      <StatusBar />
      <Taskbar />
    </div>
  );
}
